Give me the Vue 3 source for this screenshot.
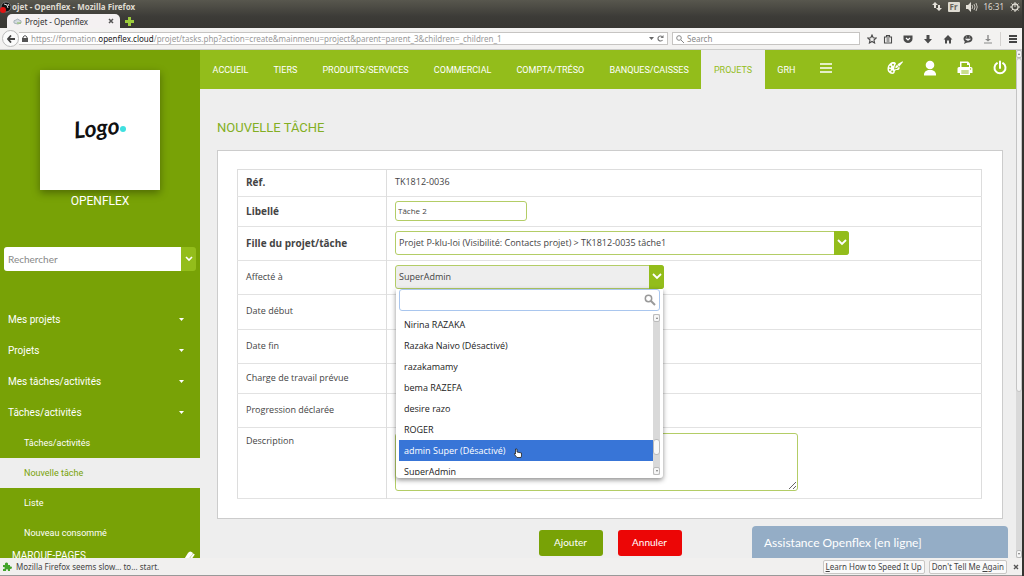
<script setup>
import { ref } from 'vue'

const tabs = ['ACCUEIL', 'TIERS', 'PRODUITS/SERVICES', 'COMMERCIAL', 'COMPTA/TRÉSO', 'BANQUES/CAISSES', 'PROJETS', 'GRH']
const menus = ['Mes projets', 'Projets', 'Mes tâches/activités', 'Tâches/activités']
const subs = ['Tâches/activités', 'Nouvelle tâche', 'Liste', 'Nouveau consommé']
const users = ['Nirina RAZAKA', 'Razaka Naivo (Désactivé)', 'razakamamy', 'bema RAZEFA', 'desire razo', 'ROGER', 'admin Super (Désactivé)', 'SuperAdmin']
const highlighted = 6
const label = ref('Tâche 2')
const description = ref('')
const search = ref('')
const query = ref('')
</script>

<template>
  <div class="window">
    <header class="titlebar">
      <div class="system">
        <svg class="orb" viewBox="0 0 12 12" aria-hidden="true"><circle cx="6" cy="6" r="5" fill="#111" stroke="#777" /><path d="M4 3l3 1 1 3M8 3l1 2" stroke="#ddd" fill="none" /><circle cx="3" cy="9" r="3" fill="#e01414" /></svg>
        <span class="caption">ojet - Openflex - Mozilla Firefox</span>
        <div class="tray">
          <svg width="10" height="9" viewBox="0 0 10 9" aria-hidden="true"><path d="M3 0L0 3h2v3h2V3h2zM7 9l3-3H8V3H6v3H4z" fill="#e3e0d8" /></svg>
          <span class="lang">Fr</span>
          <svg width="12" height="10" viewBox="0 0 12 10" aria-hidden="true"><path d="M0 3h2l3-3v10L2 7H0z" fill="#e3e0d8" /><path d="M6 3q1.500 2 0 4M8 2q2 3 0 6M10 1q2.500 4 0 8" stroke="#c4c1b8" fill="none" /></svg>
          <span class="clock">16:31</span>
          <svg width="10" height="10" viewBox="0 0 10 10" aria-hidden="true"><circle cx="5" cy="5" r="3" fill="none" stroke="#dedbd2" stroke-width="1.300" /><path d="M5 0v5M0 5h2M8 5h2M1.500 1.500l1.500 1.500M8.500 1.500L7 3M1.500 8.500L3 7M8.500 8.500L7 7M5 8v2" stroke="#dedbd2" /></svg>
        </div>
      </div>
      <div class="tabstrip">
        <div class="browsertab">
          <svg width="9" height="7" viewBox="0 0 9 7" aria-hidden="true"><path d="M1 5Q0 2 3 2Q5 0 6 2Q9 2 8 5Q5 7 1 5z" fill="#d5dce0" stroke="#a9b3ba" /><path d="M4 5h4" stroke="#8fbf63" /></svg>
          <span>Projet - Openflex</span>
          <button class="x" aria-label="Fermer l’onglet"><svg width="6" height="6" viewBox="0 0 6 6"><path d="M1 1l4 4M5 1L1 5" stroke="#555" stroke-width="1.500" /></svg></button>
        </div>
        <button class="newtab" aria-label="Nouvel onglet"><svg width="9" height="9" viewBox="0 0 9 9"><path d="M3 0h3v3h3v3H6v3H3V6H0V3h3z" fill="#9ccc3c" /></svg></button>
      </div>
    </header>

    <nav class="toolbar" aria-label="Navigateur">
      <button class="back" aria-label="Précédent"><svg width="8" height="8" viewBox="0 0 8 8"><path d="M4 0.500L1 4l3 3.500M1 4h7" stroke="#444" stroke-width="1.800" fill="none" /></svg></button>
      <div class="url">
        <svg width="6" height="8" viewBox="0 0 6 8" aria-hidden="true"><rect y="3" width="6" height="4" fill="#555" /><path d="M1 4V2Q3 -1 5 2v2" fill="none" stroke="#555" /></svg>
        <span class="address">https://formation.<b>openflex.cloud</b>/projet/tasks.php?action=create&amp;mainmenu=project&amp;parent=parent_3&amp;children=_children_1</span>
        <svg width="5" height="3" viewBox="0 0 5 3" aria-hidden="true"><path d="M0 0h5L2.500 3z" fill="#666" /></svg>
        <svg width="7" height="7" viewBox="0 0 7 7" aria-hidden="true"><path d="M5.500 5A2.500 2.500 0 1 1 5 1.500" fill="none" stroke="#777" stroke-width="1.200" /><path d="M6.500 0v3h-3z" fill="#777" /></svg>
      </div>
      <label class="find">
        <svg width="8" height="8" viewBox="0 0 8 8" aria-hidden="true"><circle cx="3" cy="3" r="2.300" fill="none" stroke="#888" /><path d="M5 5l3 3" stroke="#888" /></svg>
        <input v-model="query" placeholder="Search" aria-label="Search">
      </label>
      <div class="tools">
        <svg viewBox="0 0 10 10"><path d="M5 1l1.200 2.700 3 .3-2.200 2 .6 3L5 7.500 2.400 9 3 6 .8 4l3-.3z" fill="none" stroke="#4a4a4a" stroke-width="1.100" /></svg>
        <svg viewBox="0 0 10 10"><path d="M1.500 3h7v6h-7zM3.500 2.500v-1h3v1M3.500 5h3M3.500 7h3" fill="none" stroke="#4a4a4a" stroke-width="1.100" /></svg>
        <svg viewBox="0 0 10 10"><path d="M.5 1.500h9V5a4.500 4 0 0 1-9 0z" fill="#4a4a4a" /><path d="M3 4l2 2 2-2" fill="none" stroke="#fff" stroke-width="1.200" /></svg>
        <svg viewBox="0 0 10 10"><path d="M3.500 1h3v4H9L5 9.500 1 5h2.500z" fill="#4a4a4a" /></svg>
        <svg viewBox="0 0 10 10"><path d="M5 1l4.500 4.500H8V9.500H6V6.500H4v3H2v-4H.5z" fill="#4a4a4a" /></svg>
        <svg viewBox="0 0 10 10"><ellipse cx="5" cy="4.800" rx="4.500" ry="3.800" fill="#4a4a4a" /><path d="M2 7l-1 3 4-2z" fill="#4a4a4a" /><path d="M2.500 5q2.500 3 5 0zM3 3h1M6 3h1" fill="#eee" stroke="#eee" stroke-width=".6" /></svg>
        <svg viewBox="0 0 10 10"><path d="M4.300 1h1.400v4H8L5 7.500 2 5h2.300zM1 8.500h8v1H1z" fill="#8a8a8a" /></svg>
        <span class="bar"></span>
        <svg viewBox="0 0 10 10"><path d="M1 2h8M1 5h8M1 8h8" stroke="#444" stroke-width="1.800" /></svg>
      </div>
    </nav>

    <div class="page">
      <aside class="side">
        <div class="logo">
          <svg viewBox="0 0 120 120" role="img" aria-label="Logo">
            <text x="34" y="66" class="script" transform="rotate(-6 58 60)">Logo</text>
            <circle cx="83" cy="59" r="3" fill="#3fe0e0" />
          </svg>
        </div>
        <div class="company">OPENFLEX</div>
        <div class="lookup">
          <input v-model="search" placeholder="Rechercher" aria-label="Rechercher">
          <button aria-label="Options de recherche"><svg width="8" height="6" viewBox="0 0 8 6"><path d="M1 1l3 3 3-3" fill="none" stroke="#fff" stroke-width="1.600" /></svg></button>
        </div>
        <nav class="menu" aria-label="Menu projets">
          <a v-for="m in menus" :key="m" href="#" class="item">{{ m }}<svg width="5" height="3" viewBox="0 0 5 3" aria-hidden="true"><path d="M0 0h5L2.500 3z" fill="#fff" /></svg></a>
          <a v-for="(s, i) in subs" :key="s" href="#" class="sub" :class="{ on: i === 1 }">{{ s }}</a>
        </nav>
        <div class="marks">
          <span>MARQUE-PAGES</span>
          <svg width="14" height="12" viewBox="0 0 14 12" aria-hidden="true"><path d="M1 11L6 3q2-3 5 0l-1 2-5 6z" fill="#fff" /><path d="M7 11l5-7" stroke="#fff" stroke-width="2" /></svg>
        </div>
      </aside>

      <div class="body">
        <nav class="top" aria-label="Menu principal">
          <div class="links"><a v-for="t in tabs" :key="t" href="#" :class="{ on: t === 'PROJETS' }">{{ t }}</a></div>
          <button class="burger" aria-label="Menu"><svg width="12" height="10" viewBox="0 0 12 10"><path d="M0 1h12M0 5h12M0 9h12" stroke="#fff" stroke-width="1.400" /></svg></button>
          <div class="actions">
            <button aria-label="Thème"><svg width="16" height="16" viewBox="0 0 16 16"><path d="M9 3.500C8 1.500 5 1.800 3 3.500 0 6 0 10 1.500 12c1.500 2 4 2.500 5.500 1.500 1.200-.8.300-2 1.300-3 1.200-1 3.500 0 4.200-1.500.3-1 0-1.800-.5-2.200L10 9 7 9.500 7.800 6z" fill="#fff" /><path d="M8.200 8.300l.6-2.500 1.500-.8 1 1.300-1 1.500z" fill="#fff" /><path d="M10.500 4.300L15.500 1.200l.5.900-4 4.600z" fill="#fff" /><g fill="#93bd1b"><circle cx="6" cy="4.700" r="1" /><circle cx="3.200" cy="6.700" r="1" /><circle cx="2.900" cy="9.700" r="1" /><circle cx="5.300" cy="11.500" r="1" /></g></svg></button>
            <button aria-label="Utilisateur"><svg width="14" height="16" viewBox="0 0 14 16"><circle cx="7" cy="5" r="4.300" fill="#fff" /><path d="M1 15.500v-2Q2 10.500 5 10h4q3 .5 4 3.500v2z" fill="#fff" /></svg></button>
            <button aria-label="Imprimer"><svg width="16" height="16" viewBox="0 0 16 16"><path d="M3 1.500h8l2 2V8H3z" fill="#fff" /><path d="M4.500 3h5.500v2h2v2h-7.500z" fill="#93bd1b" /><path d="M2 7h12q1.500 0 1.500 1.500V13H13v2H3v-2H.5V8.500Q.5 7 2 7z" fill="#fff" /><path d="M4.300 10.500h7.400v1H4.300zM4.300 12.500h7.400v1H4.300z" fill="#93bd1b" /><circle cx="13.500" cy="9" r=".7" fill="#93bd1b" /></svg></button>
            <button aria-label="Déconnexion"><svg width="14" height="16" viewBox="0 0 14 16"><path d="M4 3.200a5.500 5.500 0 1 0 6 0M7 1.500v6.500" fill="none" stroke="#fff" stroke-width="2" stroke-linecap="round" /></svg></button>
          </div>
        </nav>

        <main>
          <h1>NOUVELLE TÂCHE</h1>
          <form @submit.prevent>
            <div class="panel">
              <table>
                <tbody>
                  <tr class="r27"><th class="req">Réf.</th><td>TK1812-0036</td></tr>
                  <tr class="r30"><th class="req"><label for="libelle">Libellé</label></th><td><input id="libelle" v-model="label" class="text"></td></tr>
                  <tr class="r34"><th class="req"><label for="parent">Fille du projet/tâche</label></th><td>
                    <div class="combo wide">
                      <select id="parent"><option>Projet P-klu-loi (Visibilité: Contacts projet) &gt; TK1812-0035 tâche1</option></select>
                      <span class="arrow"><svg width="10" height="7" viewBox="0 0 10 7" aria-hidden="true"><path d="M1 1l4 4 4-4" fill="none" stroke="#fff" stroke-width="1.800" /></svg></span>
                    </div>
                  </td></tr>
                  <tr class="r34"><th><label for="assignee">Affecté à</label></th><td>
                    <div class="combo narrow">
                      <button id="assignee" type="button" class="value" aria-haspopup="listbox" aria-expanded="true">SuperAdmin</button>
                      <span class="arrow"><svg width="10" height="7" viewBox="0 0 10 7" aria-hidden="true"><path d="M1 1l4 4 4-4" fill="none" stroke="#fff" stroke-width="1.800" /></svg></span>
                      <div class="drop">
                        <div class="filter">
                          <input aria-label="Filtrer les utilisateurs">
                          <svg width="12" height="12" viewBox="0 0 12 12" aria-hidden="true"><circle cx="4.500" cy="4.500" r="3.200" fill="none" stroke="#999" stroke-width="1.500" /><path d="M7 7l4 4" stroke="#999" stroke-width="2" /></svg>
                        </div>
                        <div class="results">
                          <ul role="listbox" aria-label="Utilisateurs">
                            <li v-for="(u, i) in users" :key="u" role="option" :aria-selected="i === highlighted" :class="{ hot: i === highlighted }">{{ u }}<svg v-if="i === highlighted" class="hand" width="9" height="10" viewBox="0 0 9 10" aria-hidden="true"><path d="M1.500 1h1.500v3l4.500 1v3L7 9.500H3L.5 6.500V5.500L1.500 6z" fill="#fff" stroke="#222" stroke-width=".8" /></svg></li>
                          </ul>
                          <div class="track"><i class="cap"></i><i class="thumb"></i><i class="cap down"></i></div>
                        </div>
                      </div>
                    </div>
                  </td></tr>
                  <tr class="r35"><th>Date début</th><td></td></tr>
                  <tr class="r34"><th>Date fin</th><td></td></tr>
                  <tr class="r30"><th>Charge de travail prévue</th><td></td></tr>
                  <tr class="r34"><th>Progression déclarée</th><td></td></tr>
                  <tr class="tall"><th><label for="desc">Description</label></th><td><textarea id="desc" v-model="description"></textarea></td></tr>
                </tbody>
              </table>
            </div>
            <div class="buttons">
              <button type="submit" class="add">Ajouter</button>
              <button type="button" class="cancel">Annuler</button>
            </div>
          </form>
        </main>
        <button class="assist">Assistance Openflex [en ligne]</button>
      </div>

      <div class="scroll"><i class="cap"></i><i class="thumb"></i><i class="cap down"></i></div>
    </div>

    <footer class="notice">
      <svg width="9" height="9" viewBox="0 0 9 9" aria-hidden="true"><path d="M0 3h2q-.5-2.500 1.500-2.500T5 3h2v1.500q2-.5 2 1T7 7v2H5Q5 7 4 7T3 9H0V7q2 0 2-1T0 5z" fill="#43a32b" /></svg>
      <span class="msg">Mozilla Firefox seems slow... to... start.</span>
      <button><span><u>L</u>earn How to Speed It Up</span></button>
      <button><span>Don't Tell Me <u>A</u>gain</span></button>
      <button class="close" aria-label="Fermer"><svg width="6" height="6" viewBox="0 0 6 6"><path d="M1 1l4 4M5 1L1 5" stroke="#555" stroke-width="1.400" /></svg></button>
    </footer>
  </div>
</template>

<style>
body { margin: 0; background: #eee; }
</style>

<style scoped>
* { box-sizing: border-box; }
button, input, select, textarea { font: inherit; color: inherit; margin: 0; outline: 0; }
button { border: 0; padding: 0; background: none; display: flex; align-items: center; justify-content: center; flex: none; }
a { text-decoration: none; color: inherit; }
svg { flex: none; display: block; }
.window { height: 100vh; display: flex; flex-direction: column; overflow: hidden; border-right: 2px solid #33332f; font: 8px "Noto Sans", "Open Sans", sans-serif; color: #444; }

.titlebar { height: 28px; flex: none; background: linear-gradient(#58574e, #3c3b37 60%, #383733); display: flex; flex-direction: column; justify-content: space-between; }
.system { display: flex; align-items: center; height: 13px; color: #dfdbd2; }
.orb { width: 12px; height: 12px; }
.caption { font-weight: 700; }
.tray { margin-left: auto; display: flex; align-items: center; gap: 6px; padding-right: 2px; }
.lang { background: #dedbd2; color: #66645c; font-weight: 700; padding: 0 2px; line-height: 10px; border-radius: 1px; }
.tabstrip { display: flex; align-items: center; height: 14px; padding-left: 7px; gap: 5px; }
.browsertab { width: 113px; height: 14px; background: #f4f1f2; border-radius: 5px 5px 0 0; display: flex; align-items: center; gap: 3px; padding: 0 6px; color: #333; }
.browsertab .x { margin-left: auto; }

.toolbar { height: 22px; flex: none; display: flex; align-items: center; background: #f3f2f1; border-bottom: 1px solid #ccc; padding: 0 4px 0 2px; }
.back { width: 17px; height: 17px; border-radius: 50%; border: 1px solid #bbb; background: #fbfbfb; }
.url { flex: 1; height: 13px; border: 1px solid #c6c4c2; border-left: 0; background: #fff; display: flex; align-items: center; gap: 3px; padding: 0 3px; min-width: 0; }
.address { flex: 1; color: #999; overflow: hidden; white-space: nowrap; }
.address b { font-weight: 400; color: #222; }
.find { width: 188px; height: 13px; margin-left: 4px; border: 1px solid #c6c4c2; background: #fff; display: flex; align-items: center; gap: 3px; padding: 0 3px; }
.find input { border: 0; padding: 0; flex: 1; min-width: 0; background: none; }
.find input::placeholder { color: #888; opacity: 1; }
.tools { display: flex; align-items: center; gap: 10px; padding-left: 7px; }
.tools svg { width: 10px; height: 10px; }
.tools svg:first-child { margin-right: -4px; }
.tools .bar { width: 1px; height: 14px; background: #d4d2d0; margin: 0 -3px; }

.page { flex: 1; min-height: 0; display: flex; background: #eee; overflow: hidden; }
.side { width: 200px; flex: none; background: #78a206; color: #fff; font-family: Roboto, sans-serif; overflow: hidden; }
.logo { width: 120px; margin: 20px auto 0; background: #fff; box-shadow: 0 3px 8px rgba(0, 0, 0, .35); }
.script { font: italic 700 23px Lato, sans-serif; fill: #111; }
.company { text-align: center; font-size: 12px; line-height: 22px; }
.lookup { display: flex; height: 24px; margin: 35px 4px 0; border-radius: 3px; overflow: hidden; font: 10px Lato, sans-serif; }
.lookup input { flex: 1; min-width: 0; border: 0; padding: 0 4px; background: #fff; color: #444; }
.lookup input::placeholder { color: #888; opacity: 1; }
.lookup button { width: 15px; background: #93bd1b; }
.menu { margin-top: 33px; }
.item { display: flex; align-items: center; justify-content: space-between; height: 31px; padding: 0 16px 0 8px; font-size: 10px; }
.sub { display: flex; align-items: center; height: 30px; padding-left: 24px; font-size: 9px; }
.sub.on { background: #eee; color: #78a206; }
.marks { display: flex; justify-content: space-between; padding: 2px 4px 0 12px; font-size: 10px; line-height: 12px; }

.body { flex: 1; min-width: 0; position: relative; }
.top { height: 39px; background: #93bd1b; color: #fff; display: flex; align-items: stretch; font: 9px Roboto, sans-serif; }
.links { display: flex; flex: 0 1 608px; }
.links a { display: flex; flex: 1 1 auto; align-items: center; justify-content: center; padding: 0 12px; }
.links a.on { background: #eee; color: #93bd1b; }
.burger { padding: 0 12px 4px; }
.actions { margin-left: auto; display: flex; gap: 20px; padding: 0 9px 4px 0; }
main { padding: 0 13px 0 17px; }
h1 { margin: 0; font: 13px/20px Roboto, sans-serif; color: #83ae23; padding: 29px 0 12px; }
.panel { background: #fff; border: 1px solid #ccc; padding: 18px 20px 19px 19px; }
table { width: 100%; table-layout: fixed; border-collapse: collapse; border: 1px solid #ddd; font: 9px/12px "Open Sans", sans-serif; }
tr { border-bottom: 1px solid #e2e2e2; }
th { width: 149px; text-align: left; font-weight: 400; padding: 0 8px 2px; border-right: 1px solid #ddd; }
th.req { font-weight: 700; font-size: 10px; }
td { padding: 0 8px 2px; }
.r27 { height: 27px; }
.r30 { height: 30px; }
.r34 { height: 34px; }
.r35 { height: 35px; }
.tall { height: 71px; }
.tall th { vertical-align: top; padding-top: 7px; }
.text { display: block; width: 132px; height: 20px; border: 1px solid #b3cd66; border-radius: 3px; padding: 0 2px; background: #fff; font-size: 8px; }
.combo { position: relative; display: flex; height: 24px; border: 1px solid #b3cd66; border-radius: 3px; }
.wide { max-width: 454px; }
.narrow { max-width: 269px; background: #eee; }
.combo select { flex: 1; min-width: 0; appearance: none; border: 0; background: none; padding: 0 3px; }
.value { flex: 1; justify-content: flex-start; padding: 0 3px; }
.arrow { width: 15px; margin: -1px; border-radius: 0 3px 3px 0; background: #93bd1b; display: flex; align-items: center; justify-content: center; }
.drop { position: absolute; z-index: 2; top: 23px; left: 0; right: 0; background: #fff; padding: 0 3px 3px; border-radius: 0 0 3px 3px; box-shadow: 0 2px 5px rgba(0, 0, 0, .45); color: #222; }
.filter { display: flex; align-items: center; height: 22px; border: 1px solid #a9c6ee; border-radius: 3px; padding-right: 3px; margin-bottom: 3px; }
.filter input { flex: 1; min-width: 0; border: 0; background: none; }
.results { display: flex; height: 161px; }
ul { list-style: none; margin: 0; padding: 0; flex: 1; overflow: hidden; }
li { height: 21px; line-height: 21px; padding: 0 5px; display: flex; align-items: center; gap: 8px; }
li.hot { background: #3875d7; color: #fff; }
.hand { margin-top: 5px; }
.track, .scroll { width: 7px; background: #d9d9d9; display: flex; flex-direction: column; flex: none; }
.cap { height: 8px; background: #f6f6f6; border: 1px solid #bbb; border-radius: 2px; display: flex; align-items: center; justify-content: center; }
.cap::after { content: ""; border: 1px solid transparent; border-bottom: 2px solid #777; border-top: 0; }
.cap.down::after { border-bottom: 0; border-top: 2px solid #777; }
.track .thumb { height: 16px; margin-top: auto; margin-bottom: 12px; background: #f8f8f8; border: 1px solid #bbb; border-radius: 3px; }
textarea { display: block; width: 100%; max-width: 403px; height: 58px; border: 1px solid #b3cd66; border-radius: 3px; background: #fff; resize: vertical; }
.buttons { display: flex; justify-content: center; gap: 15px; padding-top: 11px; }
.buttons button { width: 64px; height: 26px; border-radius: 3px; color: #fff; font: 10px Lato, sans-serif; padding-bottom: 2px; }
.buttons .add { background: #78a206; }
.buttons .cancel { background: #ec0606; }
.assist { position: absolute; right: 8px; bottom: 0; width: 256px; height: 32px; padding: 0 12px; justify-content: flex-start; background: #94adc6; color: #fff; border-radius: 4px 4px 0 0; font: 12px Lato, sans-serif; }
.scroll { width: 6px; }
.scroll .thumb { height: 334px; background: #f3f3f3; border: 1px solid #c4c4c4; border-radius: 3px; }
.scroll .down { margin-top: auto; }

.notice { height: 18px; flex: none; background: #f1f0ef; border-bottom: 1px solid #999; display: flex; align-items: center; gap: 4px; padding: 0 1px 0 3px; color: #444; }
.msg { margin-right: auto; }
.notice button { height: 14px; padding: 0 2px; border: 1px solid #c9c7c5; border-radius: 2px; background: #fafafa; }
.notice .close { border: 0; background: none; }
</style>
